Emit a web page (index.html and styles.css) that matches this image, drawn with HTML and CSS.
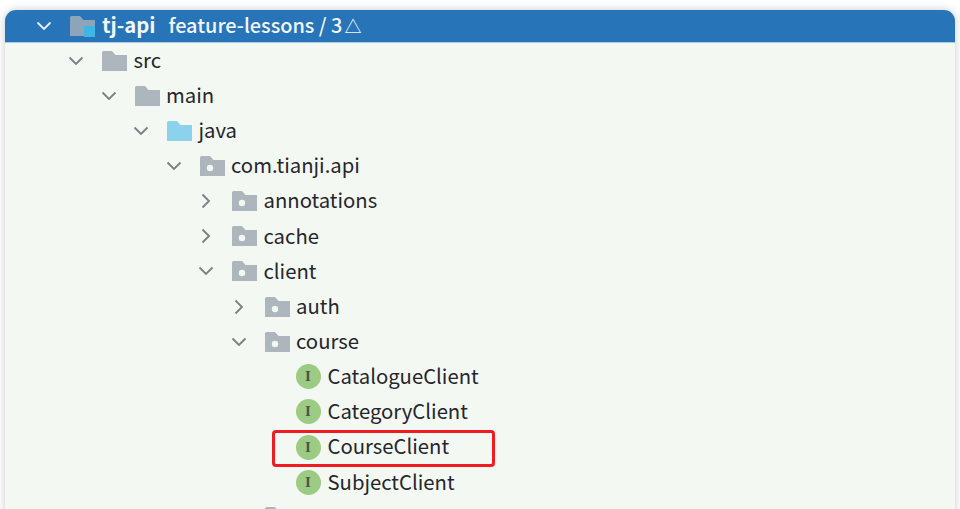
FILE: index.html
```html
<!DOCTYPE html>
<html>
  <head>
    <meta charset="utf-8">
    <title>tj-api</title>
    <link rel="stylesheet" href="styles.css">
  </head>
  <body>
    <svg class="defs" width="0" height="0">
      <symbol id="open" viewBox="0 0 16 16"><path d="M1.5 4.5 8 11l6.5-6.5" fill="none" stroke="currentColor" stroke-width="1.8"/></symbol>
      <symbol id="closed" viewBox="0 0 16 16"><path d="M4.5 1.5 11 8l-6.5 6.5" fill="none" stroke="currentColor" stroke-width="1.8"/></symbol>
      <symbol id="folder" viewBox="0 0 25 20"><path d="M0 1.5Q0 0 1.5 0H10l3.5 4H25v16H0z" fill="currentColor"/></symbol>
      <symbol id="pkg" viewBox="0 0 25 20"><path d="M0 1.5Q0 0 1.5 0H10l3.5 4H25v16H0z" fill="currentColor"/><circle cx="10" cy="12" r="3.2" fill="#f4f8f3"/></symbol>
    </svg>
    <div class="panel">
      <div class="head">
        <svg class="chev"><use href="#open"/></svg>
        <span class="module">
          <svg class="folder"><use href="#folder"/></svg>
          <i class="module-mark"></i>
        </span>
        <b class="name">tj-api</b>
        <span class="branch">feature-lessons / 3<small class="delta">△</small></span>
      </div>
      <ul class="tree">
        <li>
          <div class="row"><svg class="chev"><use href="#open"/></svg><svg class="folder"><use href="#folder"/></svg><span>src</span></div>
          <ul>
            <li>
              <div class="row"><svg class="chev"><use href="#open"/></svg><svg class="folder"><use href="#folder"/></svg><span>main</span></div>
              <ul>
                <li>
                  <div class="row"><svg class="chev"><use href="#open"/></svg><svg class="folder java"><use href="#folder"/></svg><span>java</span></div>
                  <ul>
                    <li>
                      <div class="row"><svg class="chev"><use href="#open"/></svg><svg class="folder"><use href="#pkg"/></svg><span>com.tianji.api</span></div>
                      <ul>
                        <li><div class="row"><svg class="chev"><use href="#closed"/></svg><svg class="folder"><use href="#pkg"/></svg><span>annotations</span></div></li>
                        <li><div class="row"><svg class="chev"><use href="#closed"/></svg><svg class="folder"><use href="#pkg"/></svg><span>cache</span></div></li>
                        <li>
                          <div class="row"><svg class="chev"><use href="#open"/></svg><svg class="folder"><use href="#pkg"/></svg><span>client</span></div>
                          <ul>
                            <li><div class="row"><svg class="chev"><use href="#closed"/></svg><svg class="folder"><use href="#pkg"/></svg><span>auth</span></div></li>
                            <li>
                              <div class="row"><svg class="chev"><use href="#open"/></svg><svg class="folder"><use href="#pkg"/></svg><span>course</span></div>
                              <ul class="files">
                                <li><div class="row"><i class="iface">I</i><span>CatalogueClient</span></div></li>
                                <li><div class="row"><i class="iface">I</i><span>CategoryClient</span></div></li>
                                <li><div class="row marked"><i class="iface">I</i><span>CourseClient</span></div></li>
                                <li><div class="row"><i class="iface">I</i><span>SubjectClient</span></div></li>
                              </ul>
                            </li>
                            <li><div class="row"><svg class="chev"><use href="#closed"/></svg><svg class="folder"><use href="#pkg"/></svg></div></li>
                          </ul>
                        </li>
                      </ul>
                    </li>
                  </ul>
                </li>
              </ul>
            </li>
          </ul>
        </li>
      </ul>
    </div>
  </body>
</html>
```

FILE: styles.css
```css
html, body {height: 100%}
body {
  margin: 0;
  padding: 10px 5px 0;
  box-sizing: border-box;
  overflow: hidden;
  background-color: #fff;
  font-family: "Noto Sans CJK SC", "Noto Sans", sans-serif;
  font-size: 20.3px;
  color: #24262c;
}
.defs {position: absolute}

.panel {
  height: 520px;
  border-radius: 11px 11px 0 0;
  overflow: hidden;
  background: #f4f8f3;
  box-shadow: 0 0 8px rgba(0, 0, 0, .22);
}

.head {
  display: flex;
  align-items: center;
  height: 32px;
  padding-left: 31px;
  background-color: #2874b9;
  border-bottom: 1px solid #a9cbe3;
  color: #f2f7fb;
}
.head .chev {color: #eaf2f8; margin-right: 18px}
.head .name, .head .branch {margin-top: -4px}
.module {position: relative; display: flex; margin-right: 7px}
.module .folder {color: #8ea4b8; margin: 0}
.module-mark {
  position: absolute;
  right: 0;
  bottom: -1px;
  width: 11px;
  height: 11px;
  background-color: #3fb5e5;
}
.name {margin-right: 13px; font-weight: 700}
.branch {font-size: 19.9px; font-weight: 500}
.delta {font-size: 17px; margin-left: 2px}

ul {list-style: none; margin: 0; padding: 0 0 0 32.5px}
.tree {padding-left: 63px}
.files {padding-left: 65px}

.row {
  position: relative;
  display: flex;
  align-items: center;
  height: 35.15px;
}
.row span {margin-top: -3.5px}
.chev {
  flex: none;
  width: 16px;
  height: 16px;
  margin-right: 18px;
  color: #7b7f85;
}
.folder {
  flex: none;
  width: 25px;
  height: 20px;
  margin-right: 6.5px;
  color: #aeb6bd;
}
.folder.java {color: #8bd2ec}

.iface {
  flex: none;
  width: 25px;
  height: 25px;
  margin-right: 7px;
  border-radius: 50%;
  background-color: #9ccb83;
  color: #4a5548;
  font: bold 15px/25px "Liberation Serif", serif;
  text-align: center;
}

.marked::after {
  content: "";
  position: absolute;
  left: -24px;
  top: 0;
  width: 217px;
  height: 31px;
  border: 3px solid #f01c22;
  border-radius: 4px;
}
```
